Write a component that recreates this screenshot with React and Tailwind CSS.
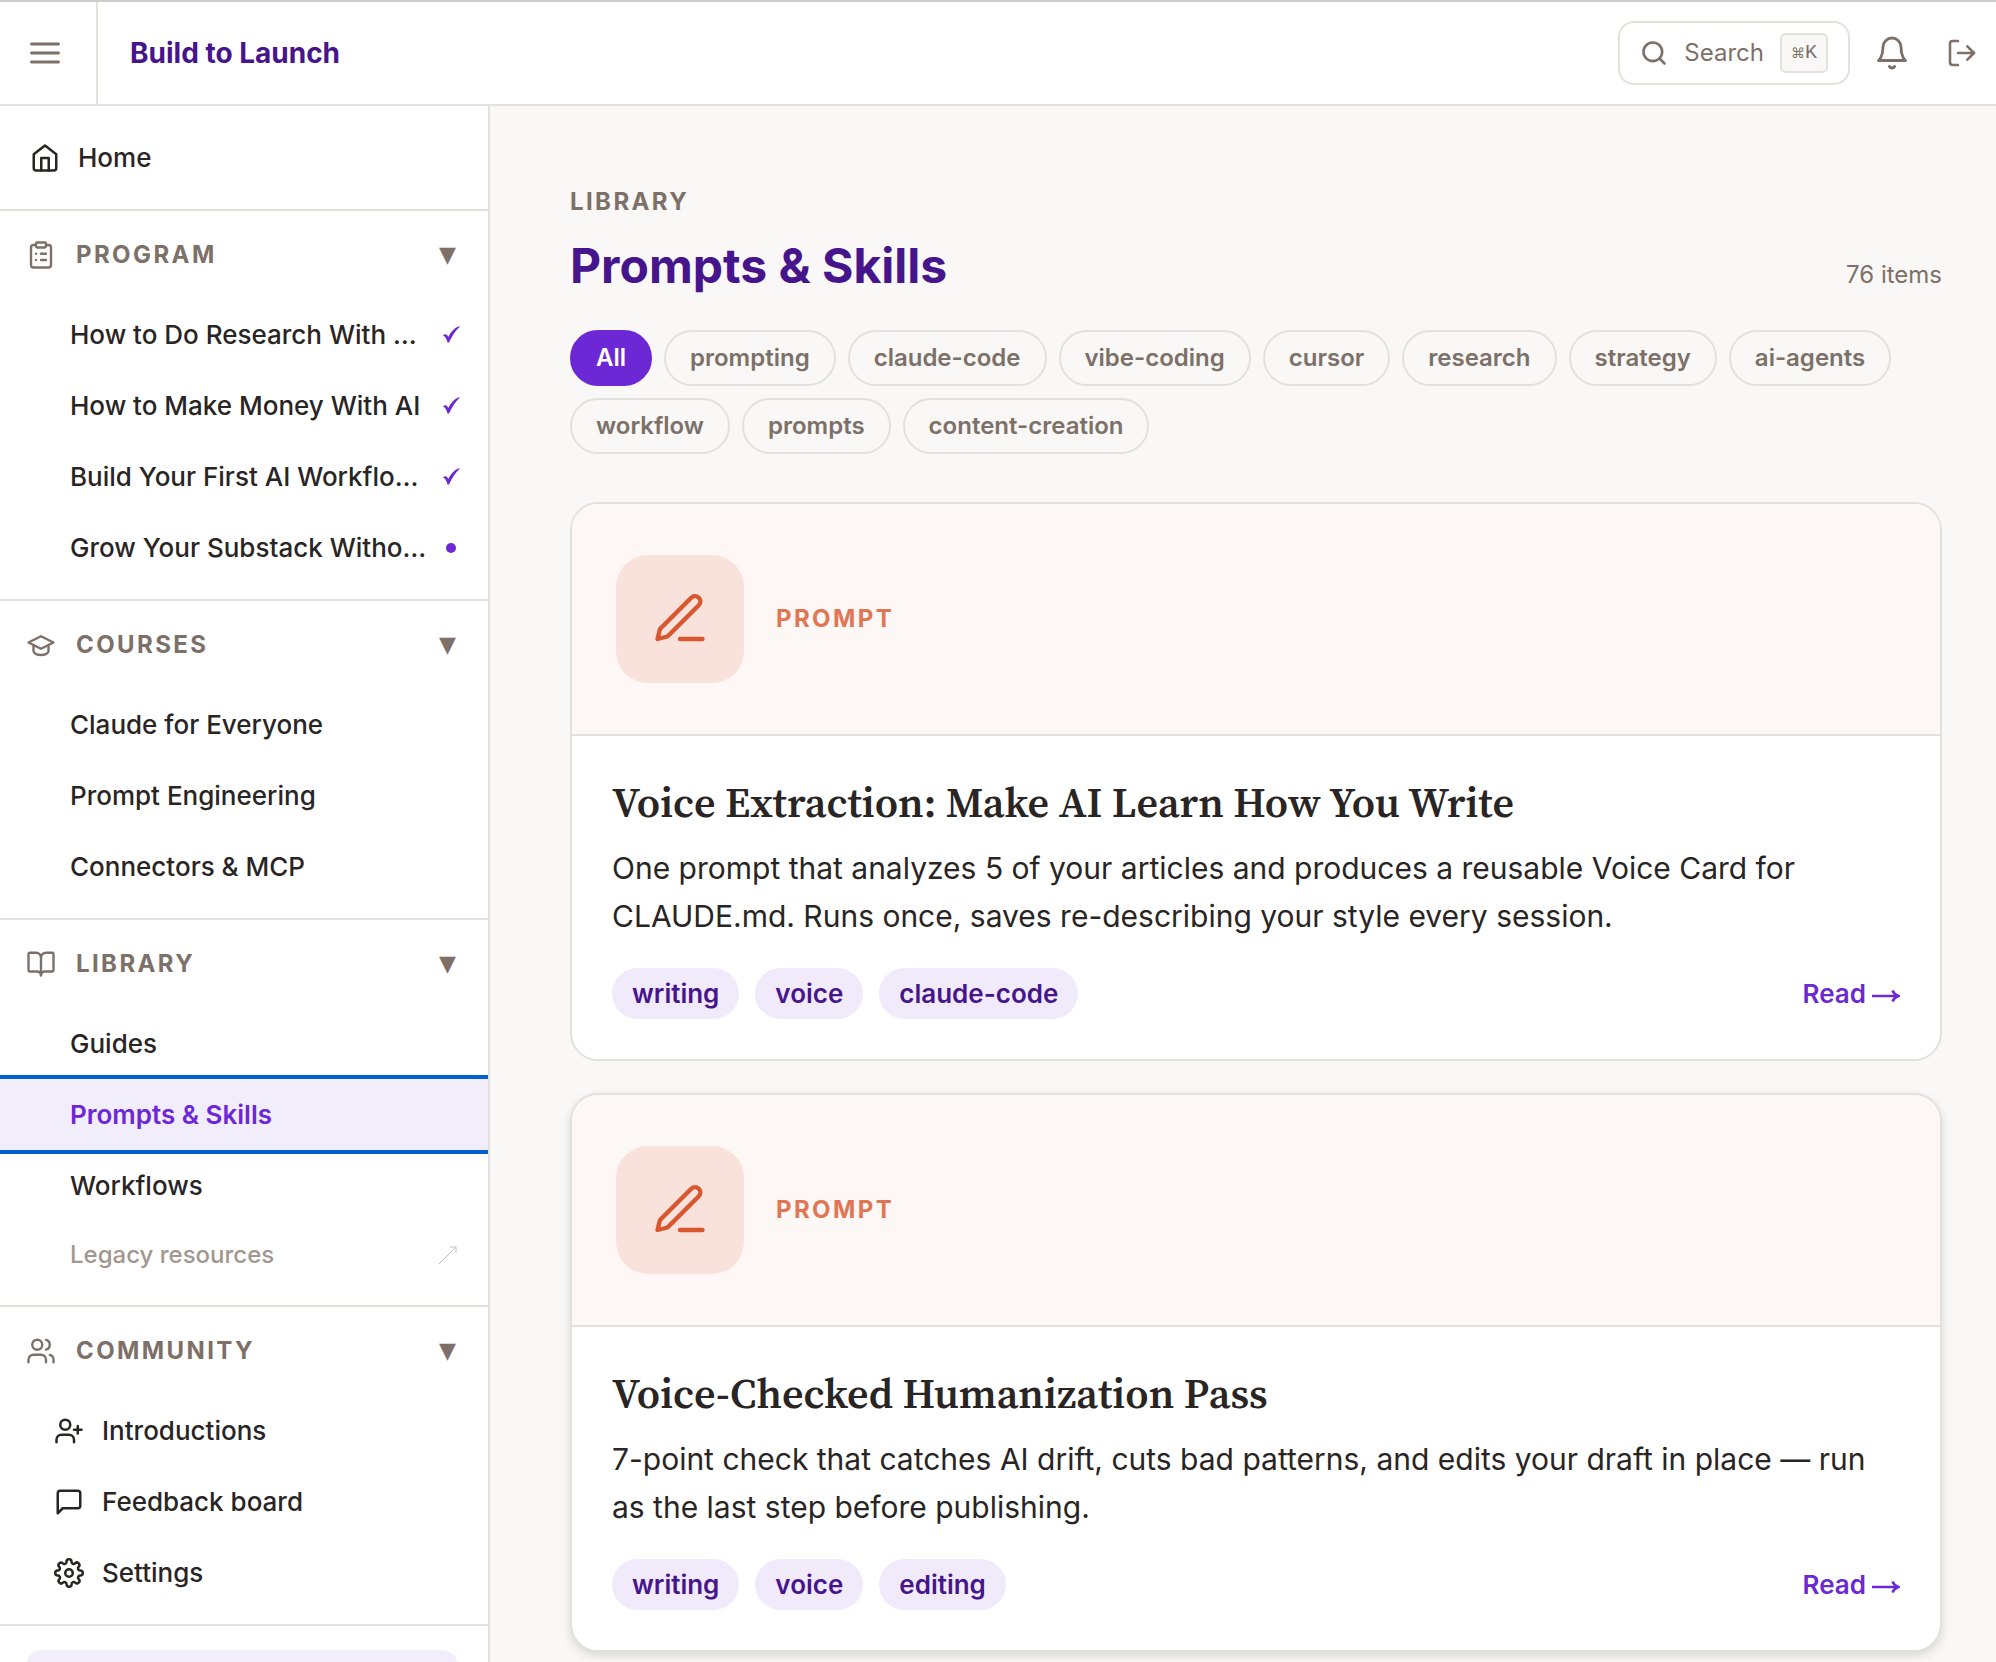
import React, { useState } from 'react';
import { ClipboardList, BookOpen, Users, UserPlus, Search, LogOut } from 'lucide-react';

const Icon = ({ size = 30, strokeWidth = 2, className = '', children }) => (
  <svg
    width={size}
    height={size}
    viewBox="0 0 24 24"
    fill="none"
    stroke="currentColor"
    strokeWidth={strokeWidth}
    strokeLinecap="round"
    strokeLinejoin="round"
    aria-hidden="true"
    className={`shrink-0 ${className}`}
  >
    {children}
  </svg>
);

const MenuIcon = () => (
  <Icon size={36} strokeWidth={1.9}>
    <path d="M3 6h18M3 12h18M3 18h18" />
  </Icon>
);

const HomeIcon = () => (
  <Icon>
    <path d="M3 9l9-7 9 7v11a2 2 0 0 1-2 2H5a2 2 0 0 1-2-2z" />
    <path d="M9 22V12h6v10" />
  </Icon>
);

const CapIcon = () => (
  <Icon strokeWidth={1.9}>
    <path d="M12 5l10 5-10 5-10-5z" />
    <path d="M6 12v5c0 1.66 2.69 3 6 3s6-1.34 6-3v-5" />
  </Icon>
);

const MessageIcon = () => (
  <Icon>
    <path d="M21 15a2 2 0 0 1-2 2H7l-4 4V5a2 2 0 0 1 2-2h14a2 2 0 0 1 2 2z" />
  </Icon>
);

const GearIcon = () => (
  <Icon>
    <circle cx="12" cy="12" r="3" />
    <path d="M19.4 15a1.65 1.65 0 0 0 .33 1.82l.06.06a2 2 0 0 1-2.83 2.83l-.06-.06a1.65 1.65 0 0 0-1.82-.33 1.65 1.65 0 0 0-1 1.51V21a2 2 0 0 1-4 0v-.09A1.65 1.65 0 0 0 9 19.4a1.65 1.65 0 0 0-1.82.33l-.06.06a2 2 0 0 1-2.83-2.83l.06-.06a1.65 1.65 0 0 0 .33-1.82 1.65 1.65 0 0 0-1.51-1H3a2 2 0 0 1 0-4h.09A1.65 1.65 0 0 0 4.6 9a1.65 1.65 0 0 0-.33-1.82l-.06-.06a2 2 0 0 1 2.83-2.83l.06.06a1.65 1.65 0 0 0 1.82.33H9a1.65 1.65 0 0 0 1-1.51V3a2 2 0 0 1 4 0v.09a1.65 1.65 0 0 0 1 1.51 1.65 1.65 0 0 0 1.82-.33l.06-.06a2 2 0 0 1 2.83 2.83l-.06.06a1.65 1.65 0 0 0-.33 1.82V9a1.65 1.65 0 0 0 1.51 1H21a2 2 0 0 1 0 4h-.09a1.65 1.65 0 0 0-1.51 1z" />
  </Icon>
);

const BellIcon = () => (
  <Icon size={36} strokeWidth={1.9}>
    <path d="M18 8A6 6 0 0 0 6 8c0 7-3 9-3 9h18s-3-2-3-9" />
    <path d="M13.73 21a2 2 0 0 1-3.46 0" />
  </Icon>
);

const PenIcon = () => (
  <Icon size={60} strokeWidth={1.75}>
    <path d="M12 20h9" />
    <path d="M16.5 3.5a2.12 2.12 0 0 1 3 3L7 19l-4 1 1-4z" />
  </Icon>
);

const CheckIcon = () => (
  <svg width="20" height="20" viewBox="0 0 20 20" fill="#6b28d4" role="img" aria-label="Done" className="shrink-0">
    <path d="M1 10.5C3 8.5 5 8.5 6.2 12C8.5 7.5 12 3.5 16 1.5L18 1.5C13 6 10 11 7 17.5L5.5 17.5C4.5 14 3.5 11.5 1 10.5Z" />
  </svg>
);

const sections = [
  {
    title: 'PROGRAM',
    icon: <ClipboardList size={30} strokeWidth={1.9} />,
    items: [
      { label: 'How to Do Research With …', status: 'done' },
      { label: 'How to Make Money With AI', status: 'done' },
      { label: 'Build Your First AI Workflo…', status: 'done' },
      { label: 'Grow Your Substack Witho…', status: 'current' },
    ],
  },
  {
    title: 'COURSES',
    icon: <CapIcon />,
    items: [
      { label: 'Claude for Everyone' },
      { label: 'Prompt Engineering' },
      { label: 'Connectors & MCP' },
    ],
  },
  {
    title: 'LIBRARY',
    icon: <BookOpen size={30} strokeWidth={1.9} />,
    items: [
      { label: 'Guides' },
      { label: 'Prompts & Skills', active: true },
      { label: 'Workflows' },
      { label: 'Legacy resources', legacy: true },
    ],
  },
  {
    title: 'COMMUNITY',
    icon: <Users size={30} strokeWidth={1.9} />,
    items: [
      { label: 'Introductions', icon: <UserPlus size={30} strokeWidth={2} /> },
      { label: 'Feedback board', icon: <MessageIcon /> },
      { label: 'Settings', icon: <GearIcon /> },
    ],
  },
];

const filters = [
  'All',
  'prompting',
  'claude-code',
  'vibe-coding',
  'cursor',
  'research',
  'strategy',
  'ai-agents',
  'workflow',
  'prompts',
  'content-creation',
];

const cards = [
  {
    title: 'Voice Extraction: Make AI Learn How You Write',
    text: 'One prompt that analyzes 5 of your articles and produces a reusable Voice Card for CLAUDE.md. Runs once, saves re-describing your style every session.',
    tags: ['writing', 'voice', 'claude-code'],
  },
  {
    title: 'Voice-Checked Humanization Pass',
    text: '7-point check that catches AI drift, cuts bad patterns, and edits your draft in place — run as the last step before publishing.',
    tags: ['writing', 'voice', 'editing'],
    raised: true,
  },
];

const Header = () => (
  <header className="flex h-[106px] shrink-0 items-stretch border-t-2 border-b-2 border-t-[#cccccc] border-b-[#e2e2dd] bg-white text-[#7c7068]">
    <button aria-label="Toggle menu" className="flex w-[98px] items-center border-r-2 border-[#e2e2dd] pl-[27px]">
      <MenuIcon />
    </button>
    <a href="#" className="flex items-center pl-8 text-[28px] font-bold text-[#46158c]">Build to Launch</a>
    <div className="ml-auto flex items-center pr-[18px]">
      <button className="flex h-16 items-center gap-4 rounded-2xl border-2 border-[#e2e2dd] px-5 text-2xl">
        <Search size={28} strokeWidth={2.25} />
        <span>Search</span>
        <kbd className="flex h-10 w-12 items-center justify-center rounded-md border-2 border-[#e2e2dd] bg-[#f9f8f6] font-['Liberation_Mono',monospace] text-[20px]">
          <span className="font-['DejaVu_Sans',sans-serif] text-[14px]">⌘</span>K
        </kbd>
      </button>
      <button aria-label="Notifications" className="ml-6"><BellIcon /></button>
      <button aria-label="Log out" className="ml-9"><LogOut size={32} strokeWidth={1.9} /></button>
    </div>
  </header>
);

const NavItem = ({ item }) => {
  if (item.legacy) {
    return (
      <a href="#" className="flex h-[68px] items-center justify-between pr-[30px] pl-[70px] text-2xl font-medium text-[#a1978f]">
        {item.label}
        <svg width="20" height="20" viewBox="0 0 20 20" fill="none" stroke="#c4beb8" aria-hidden="true">
          <path d="M1 19L18 2M12 2h6v6" />
        </svg>
      </a>
    );
  }

  if (item.icon) {
    return (
      <a href="#" className="flex h-[71px] items-center gap-[18px] pl-[54px] font-medium">
        {item.icon}
        {item.label}
      </a>
    );
  }

  return (
    <a
      href="#"
      aria-current={item.active ? 'page' : undefined}
      className={
        item.active
          ? 'flex h-[71px] items-center bg-[#f2edfb] pl-[70px] font-semibold text-[#6b28d4] outline-4 outline-[#0060d0]'
          : 'flex h-[71px] items-center justify-between pr-[26px] pl-[70px] font-medium'
      }
    >
      <span className="truncate">{item.label}</span>
      {item.status === 'done' && <CheckIcon />}
      {item.status === 'current' && <span className="mr-[6px] size-[10px] rounded-full bg-[#6b28d4]" />}
    </a>
  );
};

const Sidebar = () => (
  <aside className="w-[490px] shrink-0 overflow-hidden border-r-2 border-[#e2e2dd] bg-white text-[26px] text-[#292524]">
    <nav>
      <div className="border-b-2 border-[#e2e2dd] py-4">
        <a href="#" className="flex h-[71px] items-center gap-[18px] pl-[30px] font-medium">
          <HomeIcon />
          Home
        </a>
      </div>
      {sections.map((section) => (
        <div key={section.title} className="border-b-2 border-[#e2e2dd] pb-4">
          <button className="flex h-[88px] w-full items-center gap-5 pr-8 pl-[26px] text-2xl font-bold text-[#7c7068]">
            {section.icon}
            <span className="tracking-widest">{section.title}</span>
            <span className="ml-auto font-['DejaVu_Sans',sans-serif] text-[22px] font-normal">▼</span>
          </button>
          {section.items.map((item) => (
            <NavItem key={item.label} item={item} />
          ))}
        </div>
      ))}
    </nav>
    <div className="mt-6 mr-[30px] ml-[26px] h-40 rounded-2xl bg-[#f2edfb]" />
  </aside>
);

const Card = ({ card }) => (
  <article
    className={
      card.raised
        ? 'overflow-hidden rounded-[28px] border-2 border-[#e2e1de] bg-white shadow-[0_4px_10px_rgba(28,25,23,0.14)]'
        : 'overflow-hidden rounded-[28px] border-2 border-[#e2e1de] bg-white'
    }
  >
    <div className="flex h-[232px] items-center gap-8 border-b-2 border-[#e2e1de] bg-[#fdf8f5] pl-11">
      <div className="flex size-32 items-center justify-center rounded-[32px] bg-[#f9e2dc] text-[#d9572f]">
        <PenIcon />
      </div>
      <span className="text-2xl font-bold tracking-widest text-[#e07653]">PROMPT</span>
    </div>
    <div className="p-10">
      <h2 className="font-['Source_Serif_4','Liberation_Serif',serif] text-[42px] leading-[52px] font-semibold">{card.title}</h2>
      <p className="mt-4 text-[30px] leading-[48px]">{card.text}</p>
      <div className="mt-7 flex items-center gap-4">
        {card.tags.map((tag) => (
          <span key={tag} className="flex h-[51px] items-center rounded-full bg-[#f0eafa] px-5 text-[26px] font-semibold text-[#46158c]">
            {tag}
          </span>
        ))}
        <a href="#" className="ml-auto flex items-center gap-1.5 text-[26px] font-semibold text-[#6b28d4]">
          Read
          <svg width="28" height="16" viewBox="0 0 28 16" fill="none" stroke="currentColor" strokeWidth="2.5" aria-hidden="true" className="mt-1">
            <path d="M0 8h26M20.5 2.5c1 2.5 3 4.5 6 5.5c-3 1-5 3-6 5.5" />
          </svg>
        </a>
      </div>
    </div>
  </article>
);

const App = () => {
  const [filter, setFilter] = useState('All');

  return (
    <div className="flex h-screen flex-col overflow-hidden font-['Inter',sans-serif] text-[#292524]">
      <Header />
      <div className="flex min-h-0 flex-1">
        <Sidebar />
        <main className="min-w-0 flex-1 overflow-hidden bg-[#f9f8f6] pt-20 pr-[54px] pl-20">
          <p className="text-2xl leading-8 font-bold tracking-widest text-[#7c7068]">LIBRARY</p>
          <div className="mt-[18px] flex items-baseline justify-between">
            <h1 className="text-5xl leading-[60px] font-bold text-[#46158c]">Prompts & Skills</h1>
            <span className="text-2xl text-[#7c7068]">76 items</span>
          </div>
          <div className="mt-[34px] flex flex-wrap gap-3">
            {filters.map((name) => (
              <button
                key={name}
                onClick={() => setFilter(name)}
                className={
                  name === filter
                    ? 'h-14 rounded-full border-2 border-[#6b28d4] bg-[#6b28d4] px-6 text-2xl font-semibold text-white'
                    : 'h-14 rounded-full border-2 border-[#e2e1de] px-6 text-2xl font-semibold text-[#7c7068]'
                }
              >
                {name}
              </button>
            ))}
          </div>
          <div className="mt-12 flex flex-col gap-8">
            {cards.map((card) => (
              <Card key={card.title} card={card} />
            ))}
          </div>
        </main>
      </div>
    </div>
  );
};

export default App;
